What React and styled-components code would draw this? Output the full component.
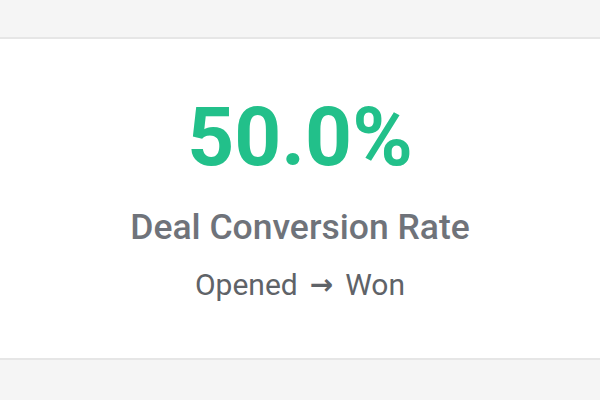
import React from "react";
import styled, { createGlobalStyle } from "styled-components";

const Global = createGlobalStyle`
  html, body {
    margin: 0;
    padding: 0;
    background: #f5f5f5;
    font-family: Roboto, "Liberation Sans", Arial, sans-serif;
  }
`;

const Page = styled.div`
  width: 600px;
  height: 400px;
  padding-top: 37px;
  box-sizing: border-box;
  overflow: hidden;
`;

const Card = styled.section`
  height: 323px;
  box-sizing: border-box;
  background: #ffffff;
  border-top: 2px solid #e6e6e6;
  border-bottom: 2px solid #e6e6e6;
  display: flex;
  flex-direction: column;
  align-items: center;
  padding-top: 57px;
`;

const Value = styled.div`
  font-size: 82px;
  font-weight: 700;
  line-height: 1;
  color: #22c08a;
`;

const Label = styled.div`
  margin-top: 32px;
  font-size: 35.5px;
  font-weight: 500;
  line-height: 1;
  color: #6f737a;
`;

const Sub = styled.div`
  margin-top: 24px;
  font-size: 30px;
  font-weight: 400;
  line-height: 1;
  color: #5f6368;
  display: flex;
  align-items: center;
  gap: 12px;
`;

const Arrow = styled.span`
  font-family: "DejaVu Sans", sans-serif;
  font-size: 28px;
  font-weight: 700;
`;

export default function App() {
  return (
    <Page>
      <Global />
      <Card>
        <Value>50.0%</Value>
        <Label>Deal Conversion Rate</Label>
        <Sub>
          <span>Opened</span>
          <Arrow>→</Arrow>
          <span>Won</span>
        </Sub>
      </Card>
    </Page>
  );
}
